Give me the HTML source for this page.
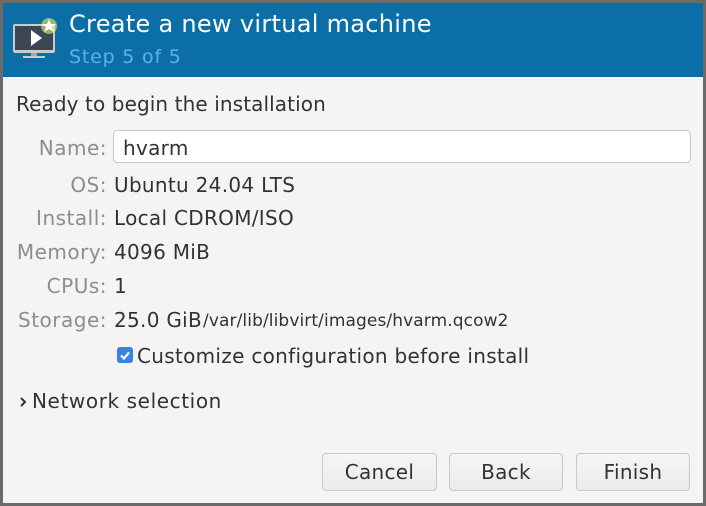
<!DOCTYPE html>
<html><head><style>
*{margin:0;padding:0;box-sizing:border-box}
body{width:706px;height:506px;background:#6a6a6a;font-family:"DejaVu Sans",sans-serif;position:relative;overflow:hidden}
.win{position:absolute;left:3px;top:3px;width:700px;height:500px;background:#f5f4f2}
.hdr{position:absolute;left:0;top:0;width:700px;height:74px;background:#0b6ea6}
.t1{position:absolute;left:66px;top:7px;font-size:24px;color:#fff;letter-spacing:0.3px}
.t2{position:absolute;left:66px;top:43px;font-size:19px;color:#5cb4e6;letter-spacing:0.8px}
.a{position:absolute;font-size:20px;color:#2e3436;white-space:nowrap;letter-spacing:0.3px}
.l{position:absolute;right:596px;font-size:20px;color:#8d8d8d;white-space:nowrap;letter-spacing:0.5px}
.entry{position:absolute;left:110px;top:127px;width:578px;height:33px;background:#fff;border:1px solid #cdc7c2;border-radius:4px}
.btn{position:absolute;top:450px;height:38px;border:1px solid #cdc7c2;border-radius:4px;background:linear-gradient(#f6f5f4,#edebe9);font-size:20px;color:#2e3436;text-align:center;line-height:36px;letter-spacing:0.3px}
</style></head><body>
<div class="win">
<div class="hdr">
<svg style="position:absolute;left:6px;top:12px" width="52" height="46" viewBox="0 0 52 46">
<rect x="4" y="9" width="42" height="29" rx="2" fill="#c9cbcc"/>
<rect x="6" y="11" width="38" height="24" fill="#3c4654"/>
<polygon points="22,15 22,31 33,23" fill="#fff"/>
<rect x="22" y="38" width="6" height="3" fill="#aaa"/>
<rect x="14" y="41" width="22" height="2" fill="#c9cbcc"/>
<circle cx="40" cy="11" r="8" fill="#e8f060" opacity="0.6"/>
<polygon points="40,4 42,9 47,9 43,12 45,17 40,14 35,17 37,12 33,9 38,9" fill="#fff"/>
</svg>
<div class="t1">Create a new virtual machine</div>
<div class="t2">Step 5 of 5</div>
</div>
<div class="a" style="left:13px;top:89px;letter-spacing:0.1px">Ready to begin the installation</div>
<div class="entry"></div>
<div class="l" style="top:133px">Name:</div><div class="a" style="left:120px;top:133px">hvarm</div>
<div class="l" style="top:170px">OS:</div><div class="a" style="left:111px;top:170px">Ubuntu 24.04 LTS</div>
<div class="l" style="top:203px">Install:</div><div class="a" style="left:111px;top:203px">Local CDROM/ISO</div>
<div class="l" style="top:237px">Memory:</div><div class="a" style="left:111px;top:237px">4096 MiB</div>
<div class="l" style="top:271px">CPUs:</div><div class="a" style="left:111px;top:271px">1</div>
<div class="l" style="top:305px">Storage:</div><div class="a" style="left:111px;top:305px">25.0 GiB</div>
<div class="a" style="left:200px;top:308px;font-size:17px;letter-spacing:0.1px">/var/lib/libvirt/images/hvarm.qcow2</div>
<svg style="position:absolute;left:114px;top:344px" width="16" height="16"><rect width="16" height="16" rx="3" fill="#3584e4"/><path d="M4 8.5l3 3 5-6" stroke="#fff" stroke-width="2.2" fill="none"/></svg>
<div class="a" style="left:134px;top:341px">Customize configuration before install</div>
<svg style="position:absolute;left:16px;top:393px" width="10" height="12"><path d="M2 2l4 4-4 4" stroke="#2e3436" stroke-width="2" fill="none"/></svg>
<div class="a" style="left:29px;top:386px;letter-spacing:0.6px">Network selection</div>
<div class="btn" style="left:319px;width:115px">Cancel</div>
<div class="btn" style="left:446px;width:114px">Back</div>
<div class="btn" style="left:573px;width:114px">Finish</div>
</div>
</body></html>
